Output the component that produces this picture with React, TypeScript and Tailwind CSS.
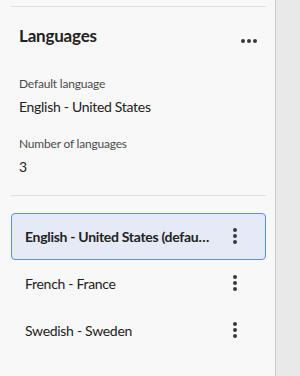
import React from "react";

const languages = [
  { name: "English - United States (default)", selected: true },
  { name: "French - France", selected: false },
  { name: "Swedish - Sweden", selected: false },
];

function Kebab() {
  return (
    <svg width="6" height="18" viewBox="0 0 6 18" className="shrink-0 text-[#3a3a3a]">
      <circle cx="3" cy="3" r="2" fill="currentColor" />
      <circle cx="3" cy="9" r="2" fill="currentColor" />
      <circle cx="3" cy="15" r="2" fill="currentColor" />
    </svg>
  );
}

function More() {
  return (
    <svg width="18" height="6" viewBox="0 0 18 6" className="text-[#3a3a3a]">
      <circle cx="3" cy="3" r="2" fill="currentColor" />
      <circle cx="9" cy="3" r="2" fill="currentColor" />
      <circle cx="15" cy="3" r="2" fill="currentColor" />
    </svg>
  );
}

export default function App() {
  return (
    <div
      className="flex h-[376px] w-[300px] bg-[#e9e9e9] text-[#222222]"
      style={{ fontFamily: "Lato, 'Open Sans', sans-serif" }}
    >
      <aside className="flex w-[276px] shrink-0 flex-col border-r border-[#cacaca] bg-[#f8f8f8] pl-[11px] pr-[9px]">
        <div className="mt-[6px] h-px bg-[#e1e1e1]" />

        <div className="mt-[16px] flex items-center justify-between pl-2 pr-[8px]">
          <h2 className="text-[17px] font-bold tracking-[-0.2px]">Languages</h2>
          <div className="pt-[10px]">
            <More />
          </div>
        </div>

        <div className="mt-[27px] px-2">
          <div className="text-[12px] leading-4 tracking-[-0.2px] text-[#4b4b4b]">Default language</div>
          <div className="mt-[5px] text-[14px] leading-5 tracking-[-0.3px]">English - United States</div>
          <div className="mt-[19px] text-[12px] leading-4 tracking-[-0.2px] text-[#4b4b4b]">Number of languages</div>
          <div className="mt-[5px] text-[14px] leading-5">3</div>
        </div>

        <div className="mt-[18px] h-px bg-[#e1e1e1]" />

        <ul className="mt-[17px] flex flex-col">
          {languages.map((l) => (
            <li
              key={l.name}
              className={
                l.selected
                  ? "flex h-[47px] items-center justify-between rounded-[4px] border border-[#5b8fe6] bg-[#e5eaf6] pl-[13px] pr-[27px]"
                  : "flex h-[47px] items-center justify-between border border-transparent pl-[13px] pr-[27px]"
              }
            >
              <span
                className={`min-w-0 max-w-[185px] truncate text-[14px] tracking-[-0.3px] ${l.selected ? "font-bold" : ""}`}
              >
                {l.name}
              </span>
              <Kebab />
            </li>
          ))}
        </ul>
      </aside>
      <div className="flex-1" />
    </div>
  );
}
